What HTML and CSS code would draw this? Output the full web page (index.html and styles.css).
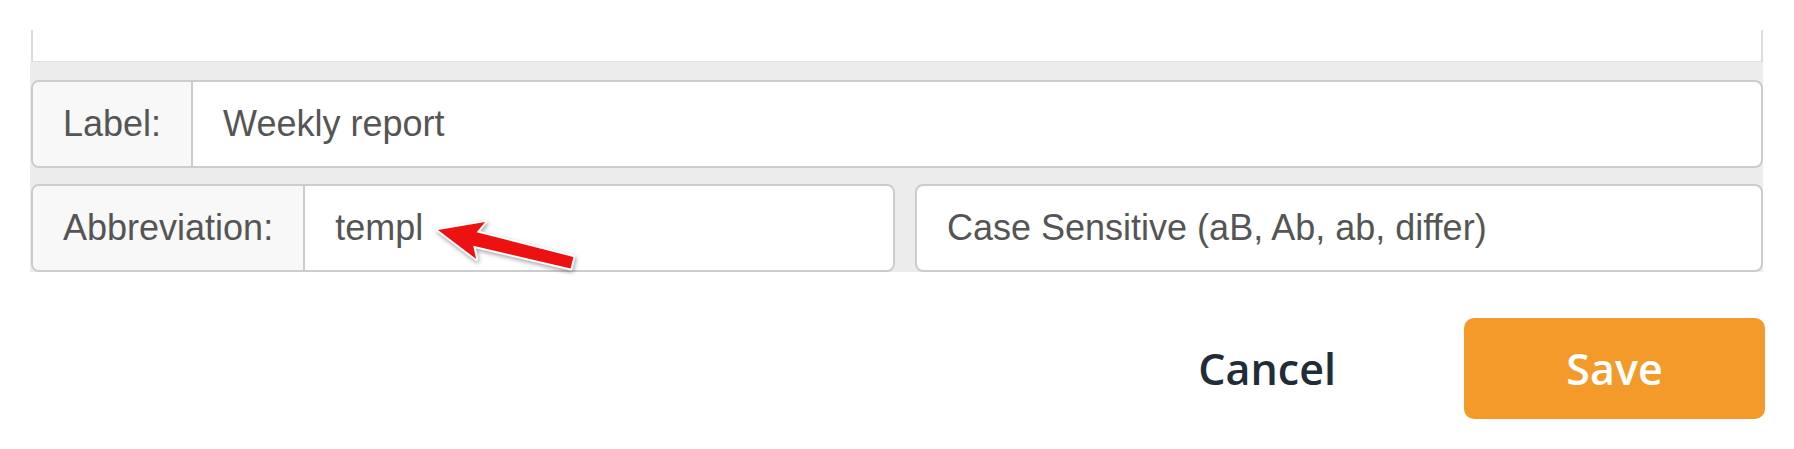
FILE: index.html
```html
<!DOCTYPE html>
<html lang="en">
<head>
<meta charset="utf-8">
<title>Snippet</title>
<link rel="stylesheet" href="styles.css">
</head>
<body>
<div class="page">
  <div class="editor"></div>
  <div class="fields">
    <div class="group">
      <span class="addon">Label:</span>
      <div class="value">Weekly report</div>
    </div>
    <div class="row2">
      <div class="group">
        <span class="addon">Abbreviation:</span>
        <div class="value">templ</div>
      </div>
      <div class="select">Case Sensitive (aB, Ab, ab, differ)</div>
    </div>
    <svg class="arrow" width="165" height="70" viewBox="0 0 165 70" aria-hidden="true">
      <polygon points="13,20 60.2,12 51.6,22.2 148.4,46.9 145.6,58.5 48.2,35.8 51.2,48.9" fill="#ee1111" stroke="#ffffff" stroke-width="4" stroke-linejoin="round" paint-order="stroke"/>
    </svg>
  </div>
  <div class="actions">
    <button class="cancel" type="button">Cancel</button>
    <button class="save" type="button">Save</button>
  </div>
</div>
</body>
</html>
```

FILE: styles.css
```css
* { box-sizing: border-box; }

body {
  margin: 0;
  background: #ffffff;
  font-family: "Liberation Sans", Arial, sans-serif;
}

.page {
  padding-top: 30px;
}

.editor {
  margin-left: 31px;
  width: 1732px;
  height: 32px;
  border-left: 2px solid #dcdcdc;
  border-right: 2px solid #dcdcdc;
  border-bottom: 1px solid #e2e2e2;
  background: #ffffff;
}

.fields {
  position: relative;
  margin-left: 30px;
  width: 1733px;
  background: #ececec;
  padding: 18px 0 0 1px;
  display: flex;
  flex-direction: column;
  gap: 16px;
}

.group {
  display: flex;
  height: 88px;
  border: 2px solid #cccccc;
  border-radius: 8px;
  background: #ffffff;
  overflow: hidden;
}

.addon {
  display: flex;
  align-items: center;
  padding: 0 30px;
  background: #f8f8f8;
  border-right: 2px solid #cccccc;
  font-size: 36px;
  color: #555555;
}

.value {
  flex: 1;
  display: flex;
  align-items: center;
  padding: 0 30px;
  font-size: 36px;
  color: #555555;
}

.row2 {
  display: grid;
  grid-template-columns: 864px 1fr;
  gap: 20px;
}

.select {
  display: flex;
  align-items: center;
  height: 88px;
  padding: 0 30px;
  border: 2px solid #cccccc;
  border-radius: 8px;
  background: #ffffff;
  font-size: 36px;
  color: #555555;
}

.arrow {
  position: absolute;
  left: 395px;
  top: 148px;
  filter: drop-shadow(1px 2px 2px rgba(0, 0, 0, 0.35));
}

.actions {
  margin-left: 30px;
  width: 1735px;
  margin-top: 46px;
  display: flex;
  justify-content: flex-end;
  align-items: center;
  gap: 128px;
}

.cancel,
.save {
  font-family: "Open Sans", "Noto Sans", sans-serif;
  font-weight: 600;
  font-size: 43px;
  border: none;
  cursor: pointer;
}

.cancel {
  background: transparent;
  color: #222b38;
  padding: 0;
}

.save {
  width: 301px;
  height: 101px;
  border-radius: 10px;
  background: #f49a2a;
  color: #ffffff;
}
```
